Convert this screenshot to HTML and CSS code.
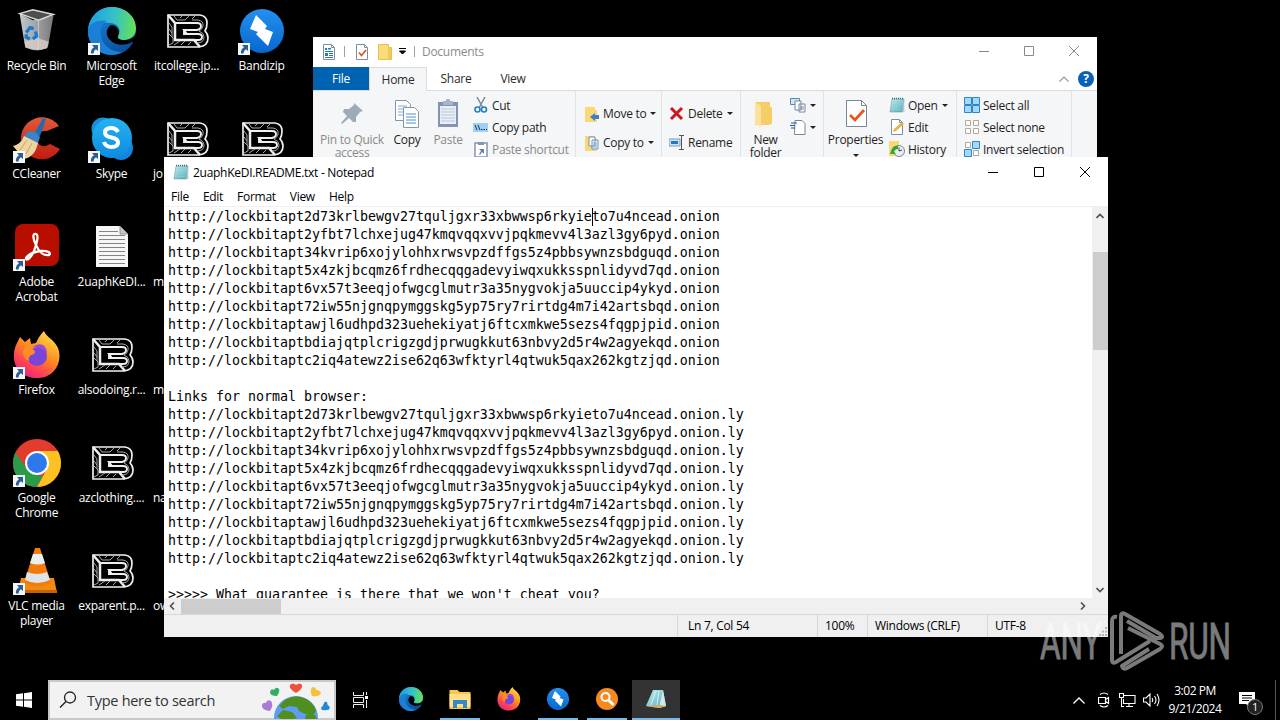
FILE: index.html
```
<!DOCTYPE html>
<html lang="en">
  <head>
    <meta charset="UTF-8">
    <title>Desktop</title>
    <link rel="stylesheet" href="styles.css">
  </head>
  <body>
    <!-- shared icons -->
    <svg class="defs">
      <defs>
        <linearGradient id="g-edge" x1="0" y1="0.2" x2="1" y2="0.3"><stop offset="0" stop-color="#1b9de2"/><stop offset="0.55" stop-color="#35c1c9"/><stop offset="1" stop-color="#62e05a"/></linearGradient>
        <linearGradient id="g-edge2" x1="0" y1="0" x2="0.6" y2="1"><stop offset="0" stop-color="#1a8be0"/><stop offset="1" stop-color="#0c4f9e"/></linearGradient>
        <linearGradient id="g-fox" x1="0.8" y1="0" x2="0.2" y2="1"><stop offset="0" stop-color="#ffe14a"/><stop offset="0.45" stop-color="#ff8a1f"/><stop offset="0.75" stop-color="#ff4055"/><stop offset="1" stop-color="#e0218a"/></linearGradient>
        <linearGradient id="g-note" x1="0" y1="0" x2="1" y2="1"><stop offset="0" stop-color="#c8f1f4"/><stop offset="1" stop-color="#4fa9b8"/></linearGradient>
        <linearGradient id="g-bin" x1="0" y1="0" x2="1" y2="0"><stop offset="0" stop-color="#c4c7c9"/><stop offset="0.5" stop-color="#a0a3a5"/><stop offset="1" stop-color="#77797b"/></linearGradient>
        <linearGradient id="g-band" x1="0" y1="0" x2="0" y2="1"><stop offset="0" stop-color="#2490f0"/><stop offset="1" stop-color="#0668cf"/></linearGradient>
        <linearGradient id="g-cc" x1="0" y1="0" x2="0" y2="1"><stop offset="0" stop-color="#e0593c"/><stop offset="1" stop-color="#c01c10"/></linearGradient>
        <linearGradient id="g-sky" x1="0" y1="0" x2="0" y2="1"><stop offset="0" stop-color="#25b3f0"/><stop offset="1" stop-color="#0d8ce0"/></linearGradient>
        <clipPath id="c-circle"><circle cx="24" cy="24" r="24"/></clipPath>
      </defs>
      <symbol id="i-arrow" viewBox="0 0 12 12">
        <rect width="12" height="12" fill="#f4f6f8"/>
        <path d="M4 2h6v6L8 6.200Q5.500 7.500 5.500 10.500H3Q2.300 6.500 6 4.200z" fill="#2b5d9b"/>
      </symbol>
      <symbol id="i-edge" viewBox="0 0 48 48">
        <circle cx="24" cy="24" r="24" fill="url(#g-edge2)"/>
        <path d="M0 22C2 8 12 0 24 0c14 0 24 10 24 21 0 8-6 12-12 12-5 0-7-2-6-4 4-6 0-13-8-13C12 15 4 17 0 22z" fill="url(#g-edge)"/>
        <path d="M0 22c3-7 11-10 19-8-7 4-8 13-4 21 4 7 12 10 19 10-6 4-15 4-22 0C3 40-1 31 0 22z" fill="#1b7fd6"/>
        <path d="M23 18c-5 3-6 10-1 15 6 6 15 6 22 2l4 1V27c-2 4-7 6-12 6-5 0-7-2-6-4 3-5-1-11-7-11z" fill="#000"/>
      </symbol>
      <symbol id="i-fox" viewBox="0 0 48 48">
        <path d="M4 12l3-6 5 5 5-4 1 6 5-1C25 7 28 3 31 0c2 6 10 8 14 17 5 13-3 30-20 30C10 48 0 37 1 24c0-5 1-8 3-12z" fill="url(#g-fox)"/>
        <circle cx="24" cy="25" r="10" fill="#7a44d8"/>
        <path d="M12 16c4-3 9-3 12 0l-5 2c3 1 4 3 2 5-4 1-6 3-5 7-7-3-7-9-4-14z" fill="#ff8d24"/>
        <path d="M20 16c6-5 14-3 14 7-3-5-7-6-14-7z" fill="#9b4ae0"/>
      </symbol>
      <symbol id="i-bandi" viewBox="0 0 44 44">
        <circle cx="22" cy="22" r="22" fill="url(#g-band)"/>
        <path d="M16 6l11 11-2 3 8 3-5 14-12-12 2-2-8-3z" fill="#fff"/>
      </symbol>
      <symbol id="i-lb" viewBox="0 0 44 36">
        <g fill="none" stroke="#efefef">
          <path d="M2 2h32q7 1 7 8 0 5-2 8 3 3 3 7 0 8-9 9H2z" stroke-width="1.700"/>
          <path d="M2 2l7 8v17h19l6 7" stroke-width="2.500"/>
          <path d="M9 10h22q4 0 4 3t-4 4H18l3 4h11q4 0 4 3t-4 3h-4M18 17v4h3" stroke-width="1.900"/>
          <path d="M8 3l3 4h8l4-4M16 3l-2 2M26 7h6q6 1 5 6-1 4-4 5 5 2 5 6 0 6-7 6M29 3l-3 3M3 10l3 4v10M3 21l4 4v5l-4 2M8 32l6-4M15 32l4-4M22 32l3-3M3 16l3 4" stroke-width="1" stroke="#a8a8a8"/>
        </g>
      </symbol>
      <symbol id="i-note" viewBox="0 0 16 16">
        <path d="M3 2h12l-1 13H1z" fill="url(#g-note)" stroke="#5b8f99" stroke-width="0.500"/>
        <path d="M15 2l.5 13H13z" fill="#b9c5c8"/>
        <path d="M3 1.500h12" stroke="#4b6a70" stroke-width="1.500" stroke-dasharray="1 1"/>
        <path d="M4 5h9M4 7.500h9M3 10h9M3 12.500h9" stroke="#8fcbd4" stroke-width="0.700"/>
      </symbol>
      <symbol id="i-page" viewBox="0 0 16 16">
        <path d="M2.500.5h8l3 3v12h-11z" fill="#fff" stroke="#7d8fa3"/>
        <path d="M10.500.5v3h3" fill="none" stroke="#7d8fa3"/>
      </symbol>
    </svg>

    <div class="desktop">
      <div class="icons">
        <div class="item">
          <svg class="pic" viewBox="-2 -2 51 51">
            <path d="M5 5l6 36q13 6 24 0l6-34-22 5z" fill="url(#g-bin)"/>
            <path d="M5 5l14-4 22 5-16 6z" fill="#4c4e50" stroke="#d7d9da" stroke-width="1.500"/>
            <path d="M10 35l14-4 12 4-2 7-10 2-12-3z" fill="#d9cec4" opacity="0.800"/>
            <path d="M25 12v31" stroke="#d4d6d7" stroke-width="0.800"/>
            <path d="M12 25l4-5 4 1M22 24l1 5-4 3M16 32l-4-2 0-3" fill="none" stroke="#1879d0" stroke-width="3.500"/>
          </svg>
          <p>Recycle Bin</p>
        </div>
        <div class="item">
          <svg class="pic" viewBox="0 0 48 48">
            <path d="M46 11A21 21 0 1 0 47 34L37 29Q27 35 24 25 24 15 34 16z" fill="url(#g-cc)"/>
            <path d="M30 3l3 1-6 17-6-2z" fill="#226cae"/>
            <path d="M15 17q7-2 12 5l-2 6-15-6z" fill="#3a84c8"/>
            <path d="M11 21l14 7q-3 14-14 16L0 31q8-2 11-10z" fill="#efd3a0"/>
            <path d="M14 25l-7 10M19 28l-6 11" stroke="#c8a46c"/>
          </svg>
          <svg class="link"><use href="#i-arrow"/></svg>
          <p>CCleaner</p>
        </div>
        <div class="item">
          <svg class="pic" viewBox="0 0 48 48">
            <rect x="2" y="1" width="44" height="42" rx="8" fill="#b70e00"/>
            <path d="M23 11c-4-1-3 5 0 11 3 7 8 11 13 10 3-2-2-5-9-4-6 1-12 4-14 7 0 4 5 0 8-7 3-8 5-16 2-17z" fill="none" stroke="#fff" stroke-width="2.300"/>
          </svg>
          <svg class="link"><use href="#i-arrow"/></svg>
          <p>Adobe<br>Acrobat</p>
        </div>
        <div class="item">
          <svg class="pic"><use href="#i-fox"/></svg>
          <svg class="link"><use href="#i-arrow"/></svg>
          <p>Firefox</p>
        </div>
        <div class="item">
          <svg class="pic" viewBox="0 0 48 48">
            <g clip-path="url(#c-circle)">
              <rect width="48" height="48" fill="#e33b2e"/>
              <path d="M24 12h24v36H24l10-18z" fill="#fdc221"/>
              <path d="M0 10l14 20 10 6 6 1-8 13H0z" fill="#2a9b49"/>
            </g>
            <circle cx="24" cy="24" r="12" fill="#fff"/>
            <circle cx="24" cy="24" r="10" fill="#2e78ee"/>
          </svg>
          <svg class="link"><use href="#i-arrow"/></svg>
          <p>Google<br>Chrome</p>
        </div>
        <div class="item">
          <svg class="pic" viewBox="0 0 48 48">
            <path d="M8 31h33l3 15H5z" fill="#f28a12"/>
            <path d="M5 43h39v3H5z" fill="#c96205"/>
            <path d="M22 1h5l11 35q-14 7-27 0z" fill="#f37b0c"/>
            <path d="M20 7h9l3 9q-7 3-15 0z" fill="#eceff1"/>
            <path d="M14 25q10 4 20 0l3 8q-13 6-25 0z" fill="#dfe4e8"/>
          </svg>
          <svg class="link"><use href="#i-arrow"/></svg>
          <p>VLC media<br>player</p>
        </div>

        <div class="item">
          <svg class="pic"><use href="#i-edge"/></svg>
          <svg class="link"><use href="#i-arrow"/></svg>
          <p>Microsoft<br>Edge</p>
        </div>
        <div class="item">
          <svg class="pic" viewBox="0 0 48 48">
            <circle cx="15" cy="14" r="11.500" fill="#1590dc"/>
            <circle cx="33" cy="33" r="12" fill="#1684dc"/>
            <circle cx="24" cy="23" r="20" fill="url(#g-sky)"/>
            <path d="M30 17q-2-4-7-4-6 0-6 4.500 0 4 6.500 5t6.500 5q0 4.500-6.500 4.500-6 0-7.500-5" fill="none" stroke="#fff" stroke-width="4"/>
          </svg>
          <svg class="link"><use href="#i-arrow"/></svg>
          <p>Skype</p>
        </div>
        <div class="item">
          <svg class="pic" viewBox="0 0 48 48">
            <path d="M8 3h24l8 8v33H8z" fill="#f6f6f6"/>
            <path d="M32 3v8h8z" fill="#c8c8c8" stroke="#777" stroke-width="0.700"/>
            <path d="M11 8.500h19M11 12.500h26M11 16.500h26M11 20.500h26M11 24.500h26M11 28.500h26M11 32.500h26M11 36.500h26M11 40.500h26" stroke="#858585"/>
          </svg>
          <p>2uaphKeDI...</p>
        </div>
        <div class="item"><svg class="pic lb"><use href="#i-lb"/></svg><p>alsodoing.r...</p></div>
        <div class="item"><svg class="pic lb"><use href="#i-lb"/></svg><p>azclothing....</p></div>
        <div class="item"><svg class="pic lb"><use href="#i-lb"/></svg><p>exparent.p...</p></div>

        <div class="item"><svg class="pic lb"><use href="#i-lb"/></svg><p>itcollege.jp...</p></div>
        <div class="item cut"><svg class="pic lb"><use href="#i-lb"/></svg><p>jo</p></div>
        <div class="item cut"><div class="pic"></div><p>m</p></div>
        <div class="item cut"><div class="pic"></div><p>m</p></div>
        <div class="item cut"><div class="pic"></div><p>na</p></div>
        <div class="item cut"><div class="pic"></div><p>ow</p></div>

        <div class="item">
          <svg class="pic small"><use href="#i-bandi"/></svg>
          <svg class="link"><use href="#i-arrow"/></svg>
          <p>Bandizip</p>
        </div>
        <div class="item"><svg class="pic lb"><use href="#i-lb"/></svg></div>
      </div>

      <div class="window explorer">
        <div class="ex-title">
          <svg width="16" height="16" viewBox="0 0 16 16"><use href="#i-page"/><path d="M4 4h2v2H4zM7 4h3v1.500H7zM4 7h8v1H4zM4 9h3v3H4zM8 9h4v1H8zM8 11h4v1H8zM4 13h8v1H4z" fill="#2878b8"/></svg>
          <i class="bar b1"></i>
          <svg class="q1" width="16" height="16" viewBox="0 0 16 16"><use href="#i-page"/><path d="M5 8.500l2.500 3L12 6" fill="none" stroke="#d9531e" stroke-width="1.700"/></svg>
          <svg class="q2" width="14" height="16" viewBox="0 0 14 16"><path d="M.5.500h10v3h3v12H.5z" fill="#fbdc7a" stroke="#e8bf52"/><path d="M10 4h3v11h-3z" fill="#f3c95c"/></svg>
          <svg class="q3" width="8" height="7" viewBox="0 0 8 7"><path d="M0 .5h7M.5 3h6L3.500 6z" fill="#000" stroke="#000"/></svg>
          <i class="bar b2"></i>
          <span>Documents</span>
          <div class="ctl grey">
            <svg viewBox="0 0 11 11"><path d="M0 5.500h10"/></svg>
            <svg viewBox="0 0 11 11"><path d="M.5.500h9v9h-9z"/></svg>
            <svg viewBox="0 0 11 11"><path d="M0 0l10 10M10 0L0 10"/></svg>
          </div>
        </div>
        <div class="tabs">
          <div class="tab file">File</div>
          <div class="tab on">Home</div>
          <div class="tab">Share</div>
          <div class="tab">View</div>
          <svg class="fold" width="10" height="6" viewBox="0 0 10 6"><path d="M.5 5.500L5 1l4.500 4.500" fill="none" stroke="#999" stroke-width="1.200"/></svg>
          <div class="help">?</div>
        </div>
        <div class="ribbon">
          <div class="group g1">
            <div class="big off pin">
              <svg width="32" height="32" viewBox="0 0 32 32"><path d="M18 5l9 8-3 1-4 5 0 5-3 0-4-4-7 6-1-1 6-7-4-4 1-3h5l5-4z" fill="#9eaab8"/></svg>
              <p>Pin to Quick<br>access</p>
            </div>
            <div class="big copy">
              <svg width="32" height="32" viewBox="0 0 32 32"><path d="M4.500 2.500h11l4 4v16h-15z" fill="#fff" stroke="#8796a6"/><path d="M7 8h9M7 11h9M7 14h9M7 17h9" stroke="#75aadd"/><path d="M12.500 9.500h11l4 4v16h-15z" fill="#fff" stroke="#8796a6"/><path d="M15 16h10M15 19h10M15 22h10M15 25h10" stroke="#4a91d6"/></svg>
              <p>Copy</p>
            </div>
            <div class="big off paste">
              <svg width="32" height="32" viewBox="0 0 32 32"><path d="M6 4h20v25H6z" fill="#8592b0"/><path d="M8 8h16v18H8z" fill="#e8eef6"/><path d="M11 3h3V1h4v2h3v4H11z" fill="#a9b4c8"/><path d="M9 11h14M9 14h14M9 17h14M9 20h14M9 23h14" stroke="#bccadc"/></svg>
              <p>Paste</p>
            </div>
            <div class="col">
              <div class="row"><svg viewBox="0 0 16 16"><path d="M4 0l6 11M12 0L6 11" stroke="#7c8b99" stroke-width="1.500"/><circle cx="4.500" cy="12.500" r="2.500" fill="none" stroke="#2380c4" stroke-width="1.600"/><circle cx="11" cy="12.500" r="2.500" fill="none" stroke="#2380c4" stroke-width="1.600"/></svg>Cut</div>
              <div class="row"><svg viewBox="0 0 16 16"><rect y="4" width="15" height="9" fill="#9fd0f4"/><path d="M2 6l2 5M5 6l2 5M8 10.500h1.500M10.500 10.500H12M13 10.500h1" stroke="#123a5c"/></svg>Copy path</div>
              <div class="row off"><svg viewBox="0 0 16 16"><path d="M2 2h12v14H2z" fill="#fff" stroke="#8592b0" stroke-width="1.500"/><path d="M5 1h6v3H5z" fill="#8592b0"/><path d="M6 8h5v5L9 11l-2 3-1-1 2-3z" fill="#6a7fa8"/></svg>Paste shortcut</div>
            </div>
          </div>
          <div class="group g2">
            <div class="row"><svg viewBox="0 0 16 16"><path d="M1 1h10v3h2v12H1z" fill="#fbd876"/><path d="M15 9h-4V7l-5 4 5 4v-2h4z" fill="#3c7fd0"/></svg>Move to<b></b></div>
            <div class="row"><svg viewBox="0 0 16 16"><path d="M1 1h10v3h2v12H1z" fill="#fbd876"/><path d="M5 2h6v9H5zM8 5h6v9H8z" fill="#fff" stroke="#6c8fb4"/><path d="M9 8h4M9 10h4M9 12h4" stroke="#6da5dc"/></svg>Copy to<b></b></div>
          </div>
          <div class="group g3">
            <div class="row"><svg viewBox="0 0 16 16"><path d="M2 2l11 11M13 2L2 13" stroke="#d0141e" stroke-width="3"/></svg>Delete<b></b></div>
            <div class="row"><svg viewBox="0 0 16 16"><path d="M0 4h11v7H0z" fill="#c8e3f8" stroke="#7f9db8"/><path d="M2 6h7v3H2z" fill="#2476c6"/><path d="M10 .5h5M12.500.500v14M10 14.500h5" stroke="#555"/></svg>Rename</div>
          </div>
          <div class="group g4">
            <div class="big newf">
              <svg width="32" height="32" viewBox="0 0 32 32"><path d="M5 4h15v5h2v17l-4 1H5z" fill="#f6cd68"/><path d="M5 4l6 4v21l-6-3z" fill="#fde39a"/></svg>
              <p>New<br>folder</p>
            </div>
            <div class="col">
              <div class="row"><svg viewBox="0 0 16 16"><path d="M.5 1.500h9v6h-9z" fill="#cfe6f6" stroke="#5b87a8"/><path d="M5 4h6v9H5zM9 7h6v8H9z" fill="#fff" stroke="#76879a"/><path d="M10 10h4M10 12h4" stroke="#76879a"/></svg><b></b></div>
              <div class="row"><svg viewBox="0 0 16 16"><path d="M5 1.500h7l3 3v11H4.500z" fill="#fff" stroke="#76879a"/><path d="M1 4h6M0 6.500h5M1 9h4" stroke="#1a5d9e"/></svg><b></b></div>
            </div>
          </div>
          <div class="group g5">
            <div class="big props">
              <svg width="32" height="32" viewBox="0 0 32 32"><path d="M6.500 2.500h15l5 5v21h-20z" fill="#fff" stroke="#76879a"/><path d="M21.500 2.500v5h5" fill="none" stroke="#76879a"/><path d="M10 17l5 5 9-10" fill="none" stroke="#e8571d" stroke-width="2.800"/></svg>
              <p>Properties<br><b></b></p>
            </div>
            <div class="col">
              <div class="row"><svg><use href="#i-note"/></svg>Open<b></b></div>
              <div class="row"><svg viewBox="0 0 16 16"><use href="#i-page"/><path d="M4 13l1-3 8-7 2 2-8 7z" fill="#eab04a"/></svg>Edit</div>
              <div class="row"><svg viewBox="0 0 16 16"><path d="M0 0h10v15H0z" fill="#fbd876"/><circle cx="10" cy="10" r="5.500" fill="#e9eef0" stroke="#7c8790"/><path d="M10 6.500V10l3-1" fill="none" stroke="#444"/><path d="M2 10q2-6 7-5v3q-3 0-4 3l2 2H1z" fill="#35a535"/></svg>History</div>
            </div>
          </div>
          <div class="group g6">
            <div class="row"><svg viewBox="0 0 16 16"><path d="M.5.500h7v7h-7zM8.500.500h7v7h-7zM.5 8.500h7v7h-7zM8.500 8.500h7v7h-7z" fill="#a5d8fa" stroke="#2d84c6"/></svg>Select all</div>
            <div class="row"><svg viewBox="0 0 16 16"><path d="M1.500 1.500h5v5h-5zM9.500 1.500h5v5h-5zM1.500 9.500h5v5h-5zM9.500 9.500h5v5h-5z" fill="#fff" stroke="#b3a79c"/></svg>Select none</div>
            <div class="row"><svg viewBox="0 0 16 16"><path d="M1.500 1.500h5v5h-5zM9.500 9.500h5v5h-5z" fill="#fff" stroke="#b3a79c"/><path d="M8.500.500h7v7h-7zM.5 8.500h7v7h-7z" fill="#a5d8fa" stroke="#2d84c6"/></svg>Invert selection</div>
          </div>
        </div>
      </div>

      <div class="window notepad">
        <div class="np-title">
          <svg width="16" height="16"><use href="#i-note"/></svg>
          <span>2uaphKeDI.README.txt - Notepad</span>
          <div class="ctl">
            <svg viewBox="0 0 11 11"><path d="M0 5.500h10"/></svg>
            <svg viewBox="0 0 11 11"><path d="M.5.500h9v9h-9z"/></svg>
            <svg viewBox="0 0 11 11"><path d="M0 0l10 10M10 0L0 10"/></svg>
          </div>
        </div>
        <div class="menu"><span>File</span><span>Edit</span><span>Format</span><span>View</span><span>Help</span></div>
        <div class="edit">
<pre>http://lockbitapt2d73krlbewgv27tquljgxr33xbwwsp6rkyie<i class="caret"></i>to7u4ncead.onion
http://lockbitapt2yfbt7lchxejug47kmqvqqxvvjpqkmevv4l3azl3gy6pyd.onion
http://lockbitapt34kvrip6xojylohhxrwsvpzdffgs5z4pbbsywnzsbdguqd.onion
http://lockbitapt5x4zkjbcqmz6frdhecqqgadevyiwqxukksspnlidyvd7qd.onion
http://lockbitapt6vx57t3eeqjofwgcglmutr3a35nygvokja5uuccip4ykyd.onion
http://lockbitapt72iw55njgnqpymggskg5yp75ry7rirtdg4m7i42artsbqd.onion
http://lockbitaptawjl6udhpd323uehekiyatj6ftcxmkwe5sezs4fqgpjpid.onion
http://lockbitaptbdiajqtplcrigzgdjprwugkkut63nbvy2d5r4w2agyekqd.onion
http://lockbitaptc2iq4atewz2ise62q63wfktyrl4qtwuk5qax262kgtzjqd.onion

Links for normal browser:
http://lockbitapt2d73krlbewgv27tquljgxr33xbwwsp6rkyieto7u4ncead.onion.ly
http://lockbitapt2yfbt7lchxejug47kmqvqqxvvjpqkmevv4l3azl3gy6pyd.onion.ly
http://lockbitapt34kvrip6xojylohhxrwsvpzdffgs5z4pbbsywnzsbdguqd.onion.ly
http://lockbitapt5x4zkjbcqmz6frdhecqqgadevyiwqxukksspnlidyvd7qd.onion.ly
http://lockbitapt6vx57t3eeqjofwgcglmutr3a35nygvokja5uuccip4ykyd.onion.ly
http://lockbitapt72iw55njgnqpymggskg5yp75ry7rirtdg4m7i42artsbqd.onion.ly
http://lockbitaptawjl6udhpd323uehekiyatj6ftcxmkwe5sezs4fqgpjpid.onion.ly
http://lockbitaptbdiajqtplcrigzgdjprwugkkut63nbvy2d5r4w2agyekqd.onion.ly
http://lockbitaptc2iq4atewz2ise62q63wfktyrl4qtwuk5qax262kgtzjqd.onion.ly

&gt;&gt;&gt;&gt;&gt; What guarantee is there that we won't cheat you?</pre>
          <div class="vscroll">
            <svg viewBox="0 0 8 6"><path d="M.5 5L4 1.500 7.500 5"/></svg>
            <div class="vthumb"></div>
            <svg viewBox="0 0 8 6"><path d="M.5 1L4 4.500 7.500 1"/></svg>
          </div>
        </div>
        <div class="hscroll">
          <svg viewBox="0 0 6 8"><path d="M5 .5L1.500 4 5 7.500"/></svg>
          <div class="hthumb"></div>
          <svg class="right" viewBox="0 0 6 8"><path d="M1 .5L4.500 4 1 7.500"/></svg>
        </div>
        <div class="status">
          <span class="s1">Ln 7, Col 54</span>
          <span class="s2">100%</span>
          <span class="s3">Windows (CRLF)</span>
          <span class="s4">UTF-8</span>
          <svg width="10" height="10" viewBox="0 0 10 10"><path d="M7 0h2v2H7zM4 3.500h2v2H4zM7 3.500h2v2H7zM1 7h2v2H1zM4 7h2v2H4zM7 7h2v2H7z" fill="#b5b5b5"/></svg>
        </div>
      </div>

      <svg class="mark" viewBox="0 0 194 62">
        <text x="1" y="49" textLength="61" lengthAdjust="spacingAndGlyphs">ANY</text>
        <text x="130" y="49" textLength="62" lengthAdjust="spacingAndGlyphs">RUN</text>
        <g fill="none" stroke="#fff" stroke-width="4" stroke-linejoin="round">
          <path d="M78 7q-5-1-5 4v39q0 4 4 2l34-21"/>
          <path d="M82 44V6q0-4 4-2l35 20q4 3 0 4l-4 0-29-17"/>
          <path d="M89 18l32 16q4 2 0 5L88 58q-4 2-5-2l27-17"/>
        </g>
      </svg>
    </div>

    <div class="taskbar">
      <svg class="start" viewBox="0 0 16 16"><path d="M0 2.300L7 1.300v6.300H0zM8 1.200L16 0v7.600H8zM0 8.500h7v6.300l-7-1zM8 8.500h8V16l-8-1.200z" fill="#fff"/></svg>
      <div class="search">
        <svg width="18" height="18" viewBox="0 0 18 18"><circle cx="11" cy="6.500" r="5.500" fill="none" stroke="#222" stroke-width="1.300"/><path d="M7 10.500L1 16.500" stroke="#222" stroke-width="1.500"/></svg>
        <span>Type here to search</span>
        <svg class="earth" width="70" height="37" viewBox="0 0 70 37">
          <circle cx="35" cy="36" r="22" fill="#5d9cf0"/>
          <path d="M24 18q10-6 19-2 10 4 12 13l-3 5-8-2-6-3-2-4-8-1-6 3-4-3zM22 28l9 2 5 6-3 1H20l-4-3zM45 33l9 0 2 4H44z" fill="#4f8f20"/>
          <path d="M35 11q-8-5-6-8 3-3 6 0 4-3 6 0 1 4-6 8z" fill="#f0513c"/>
          <path d="M16 14q-7 0-7-4 1-4 4-2 2-4 5-1 1 3-2 7z" fill="#2eb062"/>
          <path d="M51 14q-3-7 1-9 3 0 3 3 4 0 5 3-2 4-9 3z" fill="#f8bf38"/>
          <path d="M9 29q-9-1-8-6 1-3 4-2 1-4 5-2 3 4-1 10z" fill="#a77bd6"/>
          <path d="M61 28q-2-3 1-4 1-5 4-4 0 3 2 4 3 5-7 4z" fill="#2287d6"/>
        </svg>
      </div>
      <svg class="view" viewBox="0 0 17 16"><path d="M1.500 0v3.500h10V0M1.500 16v-3.500h10V16M1.500 5.500h10v5h-10zM14.500 0v3M14.500 8v8" fill="none" stroke="#eee"/><path d="M13 4h3v3h-3z" fill="#fff"/></svg>
      <div class="apps">
        <div class="app"><svg><use href="#i-edge"/></svg></div>
        <div class="app run"><svg viewBox="0 0 24 24"><path d="M1.500 3h8l2 2h11v17h-21z" fill="#f8c64b"/><path d="M1.500 7h21v13h-21z" fill="#ffdf87"/><path d="M5 13h14v8h-4v-4H9v4H5z" fill="#3688c9"/></svg></div>
        <div class="app"><svg><use href="#i-fox"/></svg></div>
        <div class="app run"><svg viewBox="-1 -1 26 26"><use href="#i-bandi" width="24" height="24"/></svg></div>
        <div class="app run"><svg viewBox="0 0 24 24"><circle cx="12" cy="12" r="11" fill="#f58a1f"/><circle cx="10.500" cy="10" r="4" fill="none" stroke="#fff" stroke-width="2"/><path d="M13.500 13l5 5" stroke="#fff" stroke-width="2.800"/></svg></div>
        <div class="app run active"><svg viewBox="0 0 24 24"><path d="M9 3h10l3 16-7 2-13-2z" fill="url(#g-note)"/><path d="M19 3l3 16-7 2z" fill="#d7e6e9"/><path d="M2 19l13 2 7-2-6-1z" fill="#d3ad62"/><path d="M12 4L7 18M15 4l-2 14" stroke="#d2f0f2"/></svg></div>
      </div>
      <div class="tray">
        <svg width="12" height="7" viewBox="0 0 12 7"><path d="M.5 6.500L6 1l5.500 5.500" fill="none" stroke="#fff" stroke-width="1.300"/></svg>
        <svg class="t1" width="12" height="16" viewBox="0 0 12 16"><path d="M.5 5.500h7v6h-7zM7.500 7.500l3-2v6l-3-2M2 2.500q4-3 8 0M2 13.500q4 3 8 0" fill="none" stroke="#fff" stroke-width="1.200"/></svg>
        <svg class="t2" width="17" height="15" viewBox="0 0 17 15"><path d="M5 2.500h11v8H4.500V6M10 10.500v3M7 13.500h7M.5.500h4v4h-4zM2.500 5v8.500H5" fill="none" stroke="#fff" stroke-width="1.100"/></svg>
        <svg class="t3" width="17" height="14" viewBox="0 0 17 14"><path d="M.5 5h2.500l4-4v12l-4-4H.5zM9 5q1.500 2 0 4M11.500 3q3 4 0 8M14 1q4 6 0 12" fill="none" stroke="#fff" stroke-width="1.100"/></svg>
        <div class="clock">3:02 PM<br>9/21/2024</div>
        <div class="notif">
          <svg width="16" height="16" viewBox="0 0 16 16"><path d="M0 0h16v12h-5v4l-4-4H0z" fill="#fff"/><path d="M3 3.500h10M3 6h10M3 8.500h7" stroke="#000"/></svg>
          <span>1</span>
        </div>
        <i class="peek"></i>
      </div>
    </div>
  </body>
</html>
```

FILE: styles.css
```
* {
  box-sizing: border-box;
}
body {
  margin: 0;
  width: 1280px;
  height: 720px;
  display: flex;
  flex-direction: column;
  overflow: hidden;
  background: #000;
  font-family: "Open Sans", "Noto Sans", sans-serif;
  font-size: 12px;
  letter-spacing: -0.280px;
  color: #000;
}
p {
  margin: 0;
}
svg {
  display: block;
  flex: none;
}
.defs {
  position: absolute;
  width: 0;
  height: 0;
}

/* desktop */
.desktop {
  height: 680px;
  position: relative;
}
.icons {
  display: grid;
  grid-template-rows: repeat(6, 108px);
  grid-auto-columns: 75px;
  grid-auto-flow: column;
  margin-left: -1px;
}
.item {
  position: relative;
  padding-top: 7px;
  color: #fff;
  text-align: center;
  line-height: 15px;
}
.pic {
  width: 48px;
  height: 48px;
  margin: 0 auto 3px;
}
.pic.lb {
  padding: 6px 1px 6px 3px;
}
.pic.small {
  padding: 2px;
}
.link {
  position: absolute;
  left: 14px;
  top: 43px;
  width: 12px;
  height: 12px;
}
.cut p {
  text-align: left;
  padding-left: 4px;
}

/* windows */
.window {
  position: absolute;
  background: #fff;
}
.ctl {
  display: flex;
  gap: 35px;
  margin-left: auto;
}
.ctl svg {
  width: 11px;
  height: 11px;
  fill: none;
  stroke: #000;
}
.ctl.grey svg {
  stroke: #8a8a8a;
}

.explorer {
  left: 313px;
  top: 37px;
  width: 784px;
  height: 121px;
  overflow: hidden;
}
.ex-title {
  height: 30px;
  display: flex;
  align-items: center;
  padding: 0 17px 1px 8px;
  color: #8b8b8b;
}
.bar {
  width: 1px;
  height: 11px;
  background: #a0a0a0;
}
.b1 {
  margin: 0 9px 0 7px;
}
.q2 {
  margin-left: 8px;
}
.q3 {
  margin-left: 7px;
}
.b2 {
  margin: 0 7px;
}
.ex-title .ctl {
  gap: 34px;
}
.tabs {
  height: 24px;
  display: flex;
  align-items: center;
  border-bottom: 1px solid #dadbdc;
  color: #2b2b2b;
}
.tab {
  width: 56px;
  height: 23px;
  line-height: 23px;
  text-align: center;
}
.file {
  background: #0063b1;
  color: #fff;
}
.on {
  width: 58px;
  height: 24px;
  background: #f5f6f7;
  border: 1px solid #dadbdc;
  border-bottom: 0;
  margin-bottom: -1px;
}
.tab:nth-child(3) {
  width: 58px;
}
.fold {
  margin-left: auto;
}
.help {
  width: 16px;
  height: 16px;
  margin: 0 3px 0 9px;
  border-radius: 50%;
  background: #0a62b8;
  color: #fff;
  font-weight: bold;
  line-height: 16px;
  text-align: center;
}
.ribbon {
  height: 90px;
  display: flex;
  background: #f5f6f7;
  color: #1f1f1f;
}
.group {
  border-right: 1px solid #e2e3e4;
  padding-top: 3px;
}
.g1, .g4, .g5 {
  display: flex;
}
.g1 {
  width: 263px;
}
.g2 {
  width: 86px;
  padding: 8px 0 0 8px;
}
.g3 {
  width: 79px;
  padding: 8px 0 0 7px;
}
.g4 {
  width: 83px;
}
.g5 {
  width: 133px;
}
.g6 {
  width: 115px;
  padding-left: 7px;
}
.big {
  padding-top: 4px;
  text-align: center;
  line-height: 13px;
}
.big svg {
  margin: 0 auto 3px;
}
.off {
  color: #8a8a8a;
}
.pin {
  width: 78px;
}
.copy {
  width: 32px;
}
.paste {
  width: 50px;
}
.newf {
  width: 49px;
}
.props {
  width: 65px;
  padding-right: 2px;
}
.row {
  height: 22px;
  display: flex;
  align-items: center;
  gap: 3px;
  white-space: nowrap;
}
.row svg {
  width: 16px;
  height: 16px;
}
.g2 .row, .g3 .row {
  height: 29px;
}
b {
  display: inline-block;
  border: 3px solid transparent;
  border-top-color: #222;
  border-bottom: 0;
  margin-left: 1px;
}

.notepad {
  left: 164px;
  top: 157px;
  width: 944px;
  height: 480px;
  display: flex;
  flex-direction: column;
}
.np-title {
  height: 30px;
  display: flex;
  align-items: center;
  gap: 4px;
  padding: 0 17px 0 9px;
}
.menu {
  height: 20px;
  display: flex;
  gap: 14px;
  padding-left: 7px;
  line-height: 20px;
  border-bottom: 1px solid #f0f0f0;
}
.edit {
  height: 391px;
  display: flex;
  justify-content: space-between;
  overflow: hidden;
}
pre {
  margin: 1px 0 0 4px;
  font: 13.290px/18px "DejaVu Sans Mono", monospace;
  letter-spacing: 0;
}
.caret {
  display: inline-block;
  width: 1px;
  height: 18px;
  margin-right: -1px;
  vertical-align: top;
  background: #000;
}
.vscroll {
  width: 16px;
  display: flex;
  flex-direction: column;
  align-items: center;
  justify-content: space-between;
  padding: 6px 0 5px;
  background: #f0f0f0;
}
.vscroll svg, .hscroll svg {
  width: 8px;
  height: 6px;
  fill: none;
  stroke: #505050;
  stroke-width: 1.600;
}
.vthumb {
  width: 15px;
  height: 98px;
  margin: 33px 0 auto;
  background: #cdcdcd;
}
.hscroll {
  height: 16px;
  display: flex;
  align-items: center;
  padding: 0 22px 0 5px;
  background: #f0f0f0;
}
.hscroll svg {
  width: 6px;
  height: 8px;
}
.hscroll .right {
  margin-left: auto;
}
.hthumb {
  width: 100px;
  height: 15px;
  margin-left: 6px;
  background: #cdcdcd;
}
.status {
  flex: 1;
  display: flex;
  justify-content: flex-end;
  align-items: flex-end;
  border-top: 1px solid #d7d7d7;
  background: #f0f0f0;
  line-height: 21px;
}
.status span {
  height: 22px;
  border-left: 1px solid #d7d7d7;
  padding-left: 7px;
}
.status .s1 {
  width: 140px;
  padding-left: 10px;
}
.s2 {
  width: 50px;
}
.s3 {
  width: 120px;
}
.s4 {
  width: 111px;
}

.mark {
  position: absolute;
  left: 1039px;
  top: 610px;
  width: 194px;
  height: 62px;
  opacity: 0.480;
}
.mark text {
  font: 50px Roboto, sans-serif;
  fill: #fff;
  stroke: #fff;
  stroke-width: 0.800;
}

/* taskbar */
.taskbar {
  height: 40px;
  display: flex;
  align-items: center;
  color: #fff;
}
.start {
  width: 16px;
  height: 16px;
  margin: 0 16px;
}
.search {
  width: 288px;
  height: 40px;
  display: flex;
  align-items: center;
  border: 2px solid #c8c8c8;
  background: #f2f2f2;
  color: #333;
  font-size: 14.500px;
  padding-left: 9px;
}
.search span {
  margin-left: 10px;
}
.earth {
  margin: 0 3px 0 auto;
}
.view {
  width: 17px;
  height: 16px;
  margin: 0 18px 0 16px;
}
.apps {
  display: flex;
  gap: 1px;
  height: 40px;
}
.app {
  width: 48px;
  padding-top: 7px;
}
.app svg {
  width: 24px;
  height: 24px;
  margin: 0 auto;
}
.app.run::after {
  content: "";
  display: block;
  width: 40px;
  height: 2px;
  margin: 7px auto 0;
  background: #76b9ed;
}
.app.active {
  background: #333;
}
.app.active::after {
  width: 48px;
}
.tray {
  display: flex;
  align-items: center;
  margin-left: auto;
}
.t1 {
  margin-left: 13px;
}
.t2 {
  margin-left: 9px;
}
.t3 {
  margin-left: 7px;
}
.clock {
  width: 70px;
  text-align: center;
  line-height: 18px;
  letter-spacing: -0.450px;
}
.notif {
  position: relative;
  width: 36px;
  padding-left: 9px;
}
.notif span {
  position: absolute;
  left: 17px;
  top: 7px;
  width: 16px;
  height: 16px;
  border: 1px solid #777;
  border-radius: 50%;
  background: #222;
  font-size: 11px;
  line-height: 14px;
  text-align: center;
}
.peek {
  width: 1px;
  height: 40px;
  margin: 0 4px 0 9px;
  background: #555;
}
```
